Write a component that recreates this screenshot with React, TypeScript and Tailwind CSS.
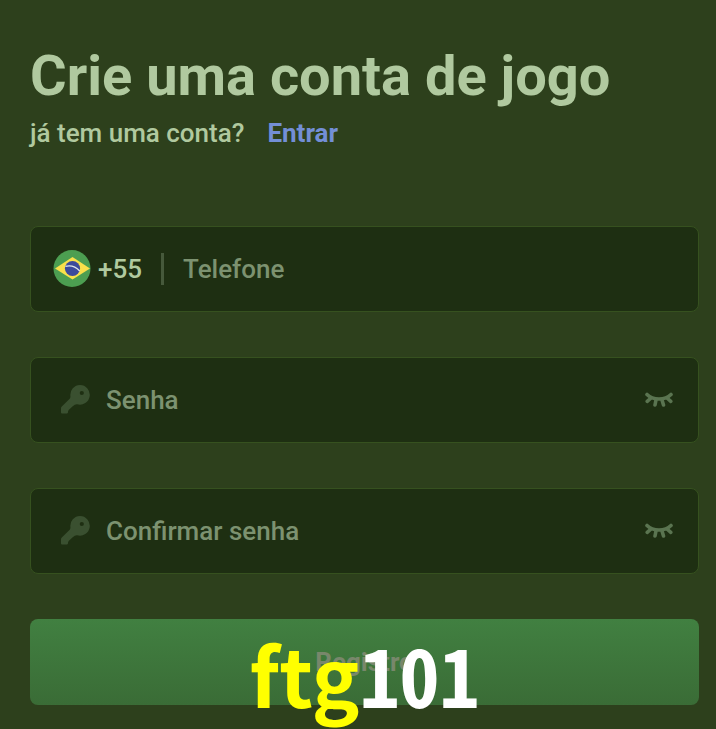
import React, { useState } from 'react';

function BrazilFlag() {
  return (
    <svg viewBox="0 0 38 38" className="h-[38px] w-[38px] shrink-0" aria-hidden="true">
      <circle cx="19" cy="18.500" r="18.500" fill="#4c9e51" />
      <path d="M2 18.500 19.500 7 37 18.500 19.500 29.500z" fill="#f9e04b" />
      <circle cx="19.500" cy="18.500" r="7.600" fill="#3c4a9c" />
      <path d="M12.400 16.300c5-1.200 10.500.4 14.300 4.700" fill="none" stroke="#dfe6ea" strokeWidth="1.300" />
    </svg>
  );
}

function KeyIcon() {
  return (
    <svg viewBox="0 0 30 30" className="h-[30px] w-[30px] shrink-0" aria-hidden="true">
      <path
        fill="#3a5030"
        fillRule="evenodd"
        d="M20 0a9.800 9.800 0 1 1-2.800 19.200c-1.500-.2-2.900.6-4.200 1.900l-3.800 3.500c-.8.800-1.100 1.500-1.200 2.600-.1.900-.7 1.300-1.600 1.300H2a1 1 0 0 1-1-1v-4.200c0-.7.300-1.300.8-1.800l7.400-7.200c1-1 1.300-2 1.200-3.400A9.800 9.800 0 0 1 20 0zm1.800 5.900a2.100 2.100 0 1 0 0 4.200 2.100 2.100 0 0 0 0-4.200z"
      />
    </svg>
  );
}

function ClosedEyeIcon() {
  return (
    <svg viewBox="0 0 28 16" className="h-4 w-7" fill="none" stroke="#5a7450" strokeWidth="3.600" strokeLinecap="round" aria-hidden="true">
      <path d="M2 2.500C8 8.500 20 8.500 26 2.500" />
      <path d="M6 6 2.200 9.300M22 6l3.800 3.300M11 8l-1 5M17 8l1.500 5" />
    </svg>
  );
}

const fieldClass =
  'flex h-[86px] items-center rounded-lg border border-[#36511f] bg-[#1e2f12]';
const inputClass =
  'min-w-0 flex-1 bg-transparent text-[26px] font-medium text-[#b0c99f] outline-none placeholder:text-[#7c9270]';

function PasswordField({ id, label }: { id: string; label: string }) {
  const [visible, setVisible] = useState(false);

  return (
    <div className={`${fieldClass} pr-[25px] pl-[29px]`}>
      <KeyIcon />
      <input
        id={id}
        type={visible ? 'text' : 'password'}
        placeholder={label}
        aria-label={label}
        className={`${inputClass} ml-4`}
      />
      <button type="button" aria-label={`Mostrar ${label}`} onClick={() => setVisible(!visible)}>
        <ClosedEyeIcon />
      </button>
    </div>
  );
}

export default function App() {
  return (
    <main className="relative min-h-screen bg-[#2d401c] pt-11 pr-[17px] pb-6 pl-[30px] font-['Roboto',sans-serif] text-[#b0c99f]">
      <h1 className="text-[56px] leading-16 font-bold">Crie uma conta de jogo</h1>
      <p className="mt-[7px] flex gap-[23px] text-[26px] leading-9 font-medium">
        <span>já tem uma conta?</span>
        <a href="#entrar" className="font-bold text-[#738fd6]">Entrar</a>
      </p>

      <form className="mt-[75px] flex flex-col gap-[45px]" onSubmit={(e) => e.preventDefault()}>
        <div className={`${fieldClass} px-[22px]`}>
          <BrazilFlag />
          <span className="ml-[7px] text-[26px] font-medium">+55</span>
          <span className="mx-[19px] h-8 w-[3px] bg-[#46593b]" />
          <input type="tel" placeholder="Telefone" aria-label="Telefone" className={inputClass} />
        </div>
        <PasswordField id="senha" label="Senha" />
        <PasswordField id="confirmar" label="Confirmar senha" />
        <button
          type="submit"
          className="h-[86px] rounded-lg bg-linear-to-b from-[#418041] to-[#3a6c36] text-[26px] font-bold text-[#78876b]"
        >
          Registro
        </button>
      </form>

      <div className="pointer-events-none absolute right-[17px] bottom-0 left-[30px] flex justify-center text-[80px] leading-28 font-bold">
        <span className="font-['Noto_Sans_CJK_SC',sans-serif] text-[#ffff00]">ftg</span>
        <span className="font-['Noto_Sans_Mono_CJK_SC','Noto_Sans_CJK_SC',monospace] text-white">101</span>
      </div>
    </main>
  );
}
